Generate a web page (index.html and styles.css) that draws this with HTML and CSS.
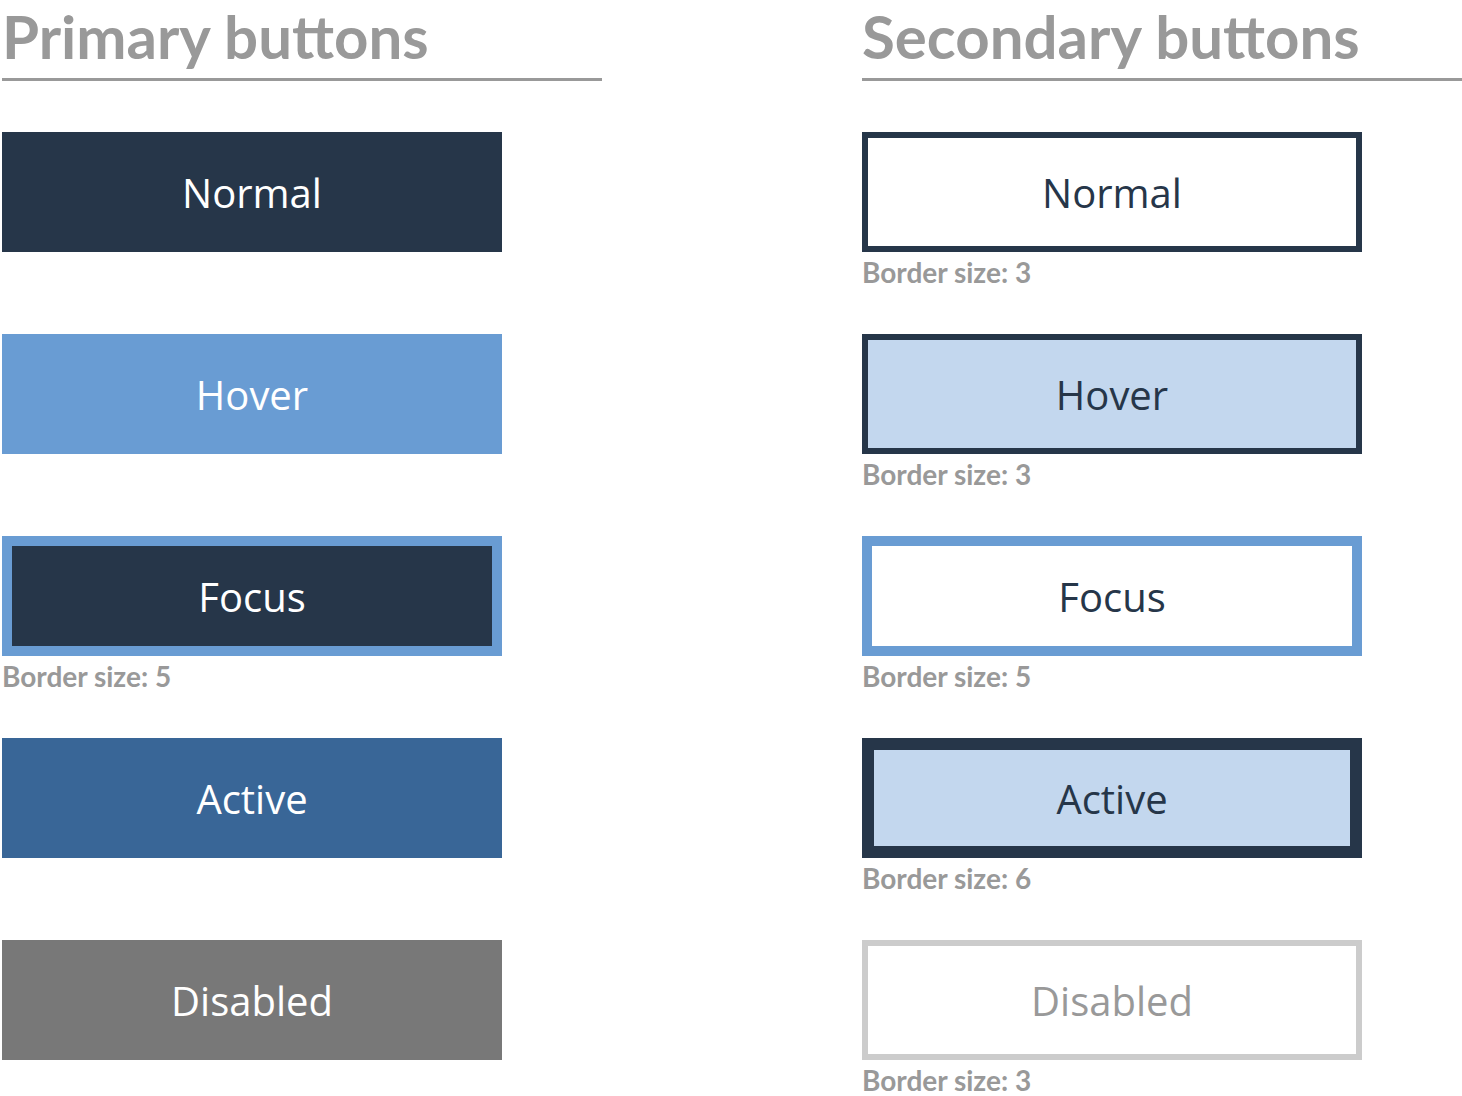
FILE: index.html
```html
<!DOCTYPE html>
<html lang="en">
<head>
<meta charset="utf-8">
<title>Buttons</title>
<link rel="stylesheet" href="styles.css">
</head>
<body>
<div class="page">
  <section class="column">
    <h2 class="heading">Primary buttons</h2>
    <div class="list">
      <div class="item"><div class="btn primary normal">Normal</div></div>
      <div class="item"><div class="btn primary hover">Hover</div></div>
      <div class="item"><div class="btn primary focus">Focus</div><div class="note">Border size: 5</div></div>
      <div class="item"><div class="btn primary active">Active</div></div>
      <div class="item"><div class="btn primary disabled">Disabled</div></div>
    </div>
  </section>
  <section class="column">
    <h2 class="heading">Secondary buttons</h2>
    <div class="list">
      <div class="item"><div class="btn secondary normal">Normal</div><div class="note">Border size: 3</div></div>
      <div class="item"><div class="btn secondary hover">Hover</div><div class="note">Border size: 3</div></div>
      <div class="item"><div class="btn secondary focus">Focus</div><div class="note">Border size: 5</div></div>
      <div class="item"><div class="btn secondary active">Active</div><div class="note">Border size: 6</div></div>
      <div class="item"><div class="btn secondary disabled">Disabled</div><div class="note">Border size: 3</div></div>
    </div>
  </section>
</div>
</body>
</html>
```
FILE: styles.css
```css
html, body {
  margin: 0;
  padding: 0;
  background: #ffffff;
}

.page {
  display: grid;
  grid-template-columns: 600px 600px;
  column-gap: 260px;
  padding-left: 2px;
}

.heading {
  margin: 0;
  padding-top: 0;
  padding-bottom: 6px;
  line-height: 72px;
  font-family: "Lato", "Liberation Sans", sans-serif;
  font-weight: 700;
  font-size: 60px;
  color: #999999;
  border-bottom: 3px solid #999999;
}

.list {
  margin-top: 51px;
  display: grid;
  grid-auto-rows: 202px;
}

.item {
  display: flex;
  flex-direction: column;
  align-items: flex-start;
}

.btn {
  box-sizing: border-box;
  width: 500px;
  height: 120px;
  display: flex;
  align-items: center;
  justify-content: center;
  font-family: "Open Sans", "Noto Sans", sans-serif;
  font-size: 40px;
  font-weight: 400;
}

.primary {
  color: #ffffff;
}

.primary.normal { background: #263649; }
.primary.hover { background: #699cd3; }
.primary.focus { background: #263649; border: 10px solid #699cd3; }
.primary.active { background: #396697; }
.primary.disabled { background: #787878; }

.secondary {
  color: #263649;
  background: #ffffff;
}

.secondary.normal { border: 6px solid #263649; }
.secondary.hover { border: 6px solid #263649; background: #c3d7ee; }
.secondary.focus { border: 10px solid #699cd3; }
.secondary.active { border: 12px solid #263649; background: #c3d7ee; }
.secondary.disabled { border: 6px solid #cccccc; color: #999999; }

.note {
  margin-top: 3px;
  font-family: "Lato", "Liberation Sans", sans-serif;
  font-weight: 700;
  font-size: 28px;
  line-height: 34px;
  color: #999999;
}
```
